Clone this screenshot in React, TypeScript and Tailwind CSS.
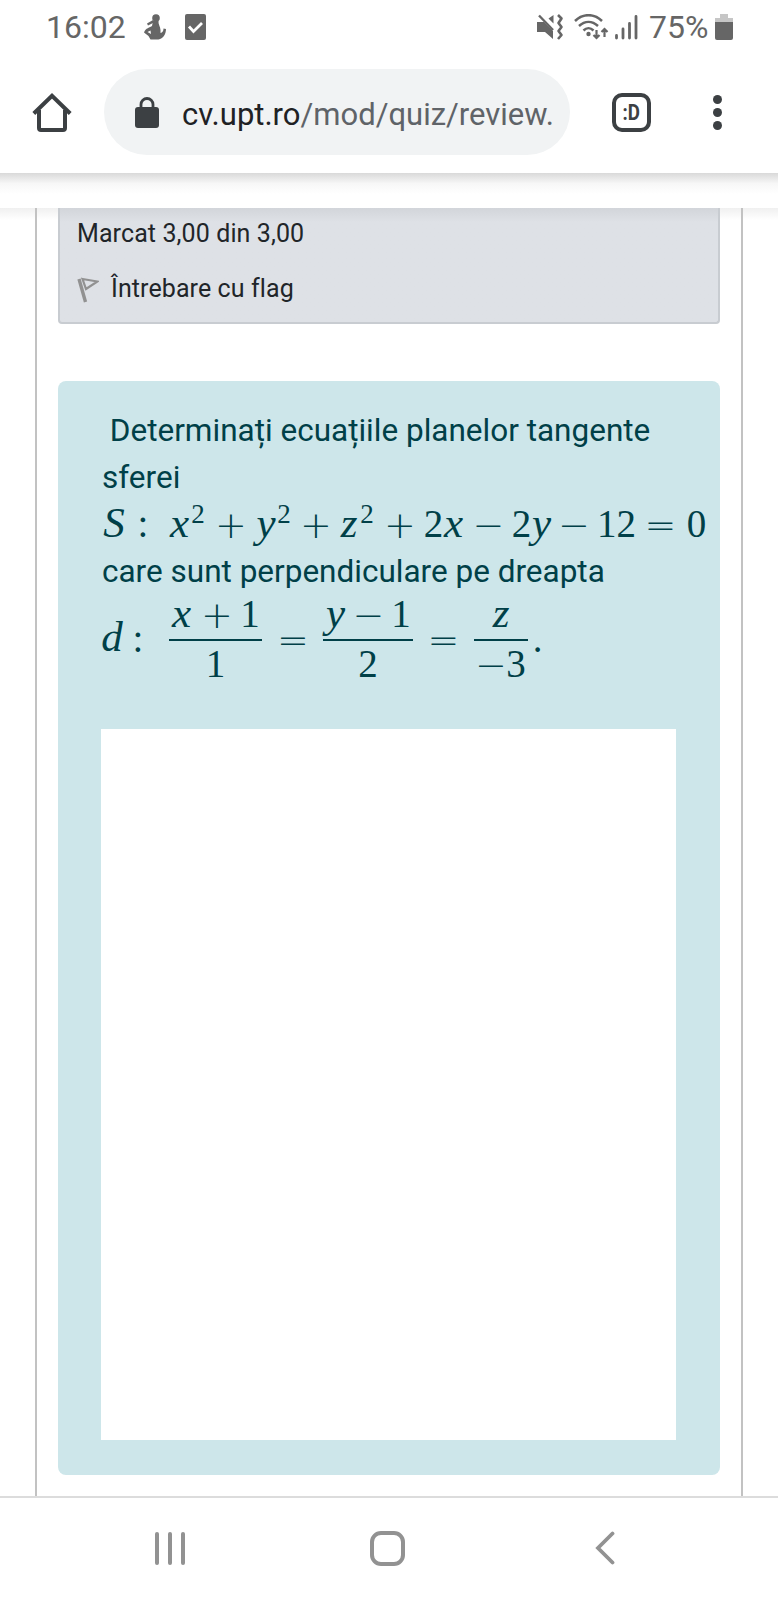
import React from "react";

type TokenProps = { w: string; children: React.ReactNode; className?: string };

function Token({ w, children, className = "" }: TokenProps) {
  return (
    <span className={`flex shrink-0 justify-center whitespace-pre ${w} ${className}`}>{children}</span>
  );
}

const variable = "font-['Liberation_Serif',serif] italic text-[43px]";
const digit = "font-['Liberation_Serif',serif] text-[39px]";
const power = "font-['Liberation_Serif',serif] text-[27px] -translate-y-[14px]";
const operator = "font-['DejaVu_Sans',sans-serif] font-extralight text-[38px] translate-y-px";

function StatusBar() {
  return (
    <div className="flex h-[54px] items-center text-[#666]">
      <span className="ml-[46px] w-[98px] text-[32px] leading-none whitespace-nowrap">16:02</span>
      <svg className="h-[26px] w-[22px]" viewBox="0 0 22 26" fill="currentColor">
        <circle cx="12" cy="4" r="3.800" />
        <path d="M9 6 3 9.500l1 2 5-2.500z" />
        <path d="M9 7h5.500c-.5 3 2 6 2 9v3c2-.5 3-2 3-4.500l2.500.5c0 5-3 10-7.500 10.500H6.500L4.500 22 0 18.500C1.500 14 6 13.500 8 12z" />
        <path d="m3.500 18 3-1.500.5 3.500z" fill="#fff" />
      </svg>
      <svg className="ml-[19px] h-[26px] w-[21px]" viewBox="0 0 21 26">
        <rect width="21" height="26" rx="2" fill="#666" />
        <path d="m4 12.500 4.500 5 8.500-8.500" fill="none" stroke="#fff" strokeWidth="2.800" />
      </svg>
      <svg className="ml-[331px] h-[26px] w-[27px]" viewBox="0 0 27 26" fill="currentColor">
        <path d="M0 8h7L16 17v8l-8-7H0zM11.500 4.500l5-3.500v8.500z" />
        <path d="m2 1.500 14 14.500" stroke="currentColor" strokeWidth="2.400" />
        <path d="M21 1l3.500 3.500L21.500 9l3 4-3 4 3 4-3.500 4" fill="none" stroke="currentColor" strokeWidth="2.600" strokeLinejoin="round" />
      </svg>
      <svg className="ml-[10px] h-[26px] w-[35px]" viewBox="0 0 35 26" fill="none" stroke="currentColor" strokeWidth="2.500">
        <path d="M1 7C9-.8 20-.8 28 7M5 12c6-5.500 13-5.500 19 0M9.500 16.500c3-3 7-3 10 0" />
        <circle cx="14.500" cy="20" r="2.200" fill="currentColor" stroke="none" />
        <path d="M22.500 16v8m-3-3 3 3 3-3M30.500 23v-8m-3 3 3-3 3 3" strokeWidth="2.200" />
      </svg>
      <svg className="ml-[6px] h-[26px] w-[23px]" viewBox="0 0 23 26" stroke="currentColor" strokeWidth="2.800" strokeLinecap="round">
        <path d="M1.500 21.500v2.500M8 15v9M14.500 9.500V24M21 2.500V24" />
      </svg>
      <span className="ml-[11px] w-[66px] text-[32px] leading-none whitespace-nowrap">75%</span>
      <svg className="h-[26px] w-[18px]" viewBox="0 0 18 26">
        <path d="M5 0h8v4h5v6H0V4h5z" fill="#c6c6c6" />
        <path d="M0 8h18v16q0 2-2 2H2q-2 0-2-2z" fill="#666" />
      </svg>
    </div>
  );
}

function AddressBar() {
  return (
    <div className="flex h-[119px] items-start bg-white pt-[15px] text-[#3c4043]">
      <svg className="mt-[24px] ml-[32px] h-[40px] w-[40px]" viewBox="0 0 40 40" fill="none" stroke="currentColor" strokeWidth="4" strokeLinecap="butt">
        <path d="M1.800 20.500 20 2.800l18.200 17.700M7 17v18q0 2 2 2h22q2 0 2-2V17" />
      </svg>
      <div className="ml-[32px] flex h-[86px] w-[466px] items-center rounded-full bg-[#f1f3f4]">
        <svg className="ml-[31px] h-[31px] w-[24px]" viewBox="0 0 24 31">
          <rect y="10" width="24" height="21" rx="3" fill="#3c4043" />
          <path d="M6 12V7.500a6 6 0 0 1 12 0V12" fill="none" stroke="#3c4043" strokeWidth="2.800" />
        </svg>
        <span className="mt-[5px] ml-[23px] w-[374px] overflow-hidden text-[31px] leading-[40px] whitespace-nowrap text-[#5f6368]">
          <span className="text-[#202124]">cv.upt.ro</span>/mod/quiz/review.
        </span>
      </div>
      <div className="mt-[24px] ml-[42px] flex h-[39px] w-[39px] items-center justify-center rounded-[10px] border-4 border-[#3c4043] text-[22px] leading-none font-bold">
        <span className="scale-x-85">:D</span>
      </div>
      <div className="mt-[26px] ml-[62px] flex flex-col gap-[4px]">
        <i className="size-[9px] rounded-full bg-[#3c4043]" />
        <i className="size-[9px] rounded-full bg-[#3c4043]" />
        <i className="size-[9px] rounded-full bg-[#3c4043]" />
      </div>
    </div>
  );
}

function Fraction({ w, top, bottom }: { w: string; top: React.ReactNode; bottom: React.ReactNode }) {
  return (
    <div className={`flex shrink-0 flex-col ${w}`}>
      <div className="flex h-[49px] items-baseline leading-[46px]">{top}</div>
      <div className="h-[2px] bg-[#004048]" />
      <div className="flex h-[47px] items-baseline leading-[45px]">{bottom}</div>
    </div>
  );
}

function Question() {
  return (
    <section className="mt-[57px] h-[1094px] w-[662px] rounded-[8px] bg-[#cde6ea] pt-[26px] pl-[43px] text-[#004048]">
      <p className="h-[92px] pl-px text-[31.500px] leading-[47px] whitespace-pre">
        {" Determinați ecuațiile planelor tangente\nsferei"}
      </p>
      <div className="flex h-[49px] items-baseline pl-px leading-[48px]">
        <Token w="w-[24px]" className={variable}>S</Token>
        <Token w="w-[6px]" className={`ml-[14px] ${digit}`}>:</Token>
        <Token w="w-[19px]" className={`ml-[24px] ${variable}`}>x</Token>
        <Token w="w-[12px]" className={`ml-[3px] ${power}`}>2</Token>
        <Token w="w-[26px]" className={`ml-[14px] ${operator}`}>+</Token>
        <Token w="w-[18px]" className={`ml-[13px] ${variable}`}>y</Token>
        <Token w="w-[12px]" className={`ml-[3px] ${power}`}>2</Token>
        <Token w="w-[26px]" className={`ml-[13px] ${operator}`}>+</Token>
        <Token w="w-[16px]" className={`ml-[12px] ${variable}`}>z</Token>
        <Token w="w-[12px]" className={`ml-[4px] ${power}`}>2</Token>
        <Token w="w-[26px]" className={`ml-[14px] ${operator}`}>+</Token>
        <Token w="w-[17px]" className={`ml-[12px] ${digit}`}>2</Token>
        <Token w="w-[19px]" className={`ml-[2px] ${variable}`}>x</Token>
        <Token w="w-[23px]" className={`ml-[14px] ${operator}`}>−</Token>
        <Token w="w-[17px]" className={`ml-[13px] ${digit}`}>2</Token>
        <Token w="w-[19px]" className={`ml-[2px] ${variable}`}>y</Token>
        <Token w="w-[24px]" className={`ml-[11px] ${operator}`}>−</Token>
        <Token w="w-[35px]" className={`ml-[13px] ${digit}`}>12</Token>
        <Token w="w-[25px]" className={`ml-[14px] ${operator}`}>=</Token>
        <Token w="w-[17px]" className={`ml-[15px] ${digit}`}>0</Token>
      </div>
      <p className="h-[42px] pl-px text-[31.500px] leading-[48px] whitespace-nowrap">care sunt perpendiculare pe dreapta</p>
      <div className="flex h-[98px] items-center pl-px leading-[48px]">
        <Token w="w-[20px]" className={`${variable} -translate-y-[2px]`}>d</Token>
        <Token w="w-[6px]" className={`ml-[13px] ${digit}`}>:</Token>
        <div className="ml-[28px] flex">
          <Fraction
            w="w-[93px]"
            top={<><Token w="w-[19px]" className={`ml-[3px] ${variable}`}>x</Token><Token w="w-[26px]" className={`ml-[13px] ${operator}`}>+</Token><Token w="w-[14px]" className={`ml-[13px] ${digit}`}>1</Token></>}
            bottom={<Token w="w-full" className={digit}>1</Token>}
          />
        </div>
        <Token w="w-[26px]" className={`ml-[18px] ${operator}`}>=</Token>
        <div className="ml-[17px] flex">
          <Fraction
            w="w-[90px]"
            top={<><Token w="w-[19px]" className={`ml-[3px] ${variable}`}>y</Token><Token w="w-[23px]" className={`ml-[12px] ${operator}`}>−</Token><Token w="w-[14px]" className={`ml-[14px] ${digit}`}>1</Token></>}
            bottom={<Token w="w-full" className={digit}>2</Token>}
          />
        </div>
        <Token w="w-[25px]" className={`ml-[18px] ${operator}`}>=</Token>
        <div className="ml-[18px] flex">
          <Fraction
            w="w-[54px]"
            top={<Token w="w-[54px]" className={variable}>z</Token>}
            bottom={<><Token w="w-[24px]" className={`ml-[5px] ${operator}`}>−</Token><Token w="w-[16px]" className={`ml-[5px] ${digit}`}>3</Token></>}
          />
        </div>
        <Token w="w-[5px]" className={`ml-[7px] ${digit}`}>.</Token>
      </div>
      <div className="mt-[41px] h-[711px] w-[575px] bg-white" />
    </section>
  );
}

export default function App() {
  return (
    <div className="flex h-[1600px] w-[778px] flex-col overflow-hidden bg-white font-['Roboto',sans-serif]">
      <StatusBar />
      <AddressBar />
      <div className="h-[35px] shrink-0 bg-linear-to-b from-[#d9d9d9] via-[#f7f7f7] via-30% to-white to-60%" />
      <div className="shrink-0 bg-linear-to-b from-[#f0f0f0] to-white to-[12px]">
        <main className="mx-[35px] flex h-[1288px] flex-col border-x-2 border-[#c2c2c2] px-[21px]">
          <section className="flex h-[116px] w-[662px] shrink-0 flex-col rounded-b-[4px] border-x-2 border-b-2 border-[#c8ccd1] bg-[#dee1e6] bg-linear-to-b from-[#d2d5da] to-[#dee1e6] to-[14px] pl-[17px] text-[25px] text-[#212529]">
            <span className="mt-[8px] leading-[36px] tracking-[0.1px]">Marcat 3,00 din 3,00</span>
            <div className="mt-[19px] flex items-center leading-[36px]">
              <svg className="mt-[2px] h-[27px] w-[22px]" viewBox="0 0 22 27" fill="none" stroke="#919191">
                <path d="m2 2 6.500 23" strokeWidth="3.400" />
                <path d="m5.500 2 15 2.500L9 12z" strokeWidth="2.200" />
              </svg>
              <span className="ml-[12px] tracking-[0.1px]">Întrebare cu flag</span>
            </div>
          </section>
          <Question />
        </main>
      </div>
      <nav className="flex h-[104px] shrink-0 items-start border-t-2 border-[#dcdcdc] pt-[33px] text-[#929292]">
        <div className="mt-px ml-[155px] flex gap-[9px]">
          <i className="h-[33px] w-[4px] rounded-full bg-[#929292]" />
          <i className="h-[33px] w-[4px] rounded-full bg-[#929292]" />
          <i className="h-[33px] w-[4px] rounded-full bg-[#929292]" />
        </div>
        <div className="ml-[185px] h-[35px] w-[35px] rounded-[11px] border-4 border-[#929292]" />
        <svg className="ml-[190px] h-[34px] w-[20px]" viewBox="0 0 20 34" fill="none" stroke="currentColor" strokeWidth="3.800" strokeLinecap="round">
          <path d="M17.500 2.500 3 17l14.500 14.500" />
        </svg>
      </nav>
    </div>
  );
}
